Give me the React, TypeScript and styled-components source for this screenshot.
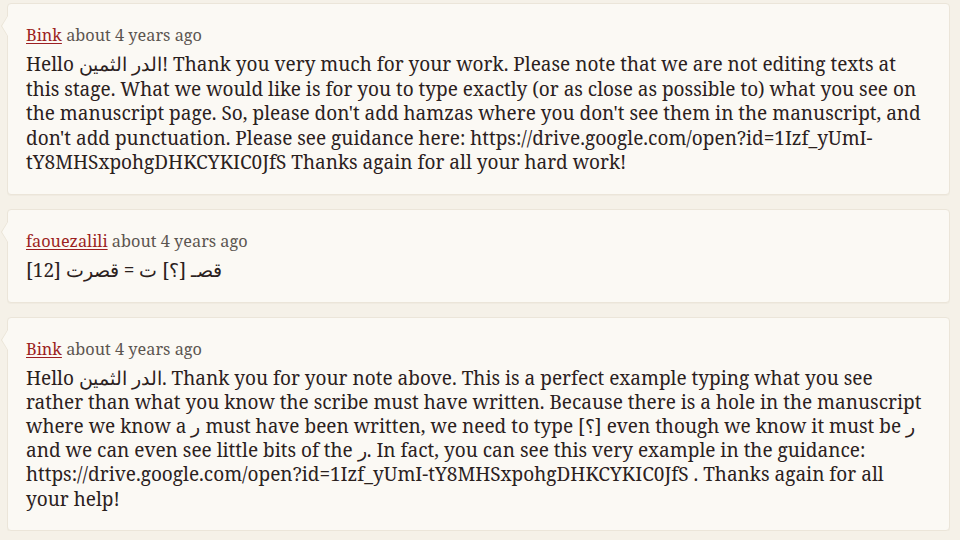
import React from "react";
import styled, { createGlobalStyle } from "styled-components";

const GlobalStyle = createGlobalStyle`
  html, body {
    margin: 0;
    padding: 0;
    background: #f5f1e8;
  }
  body {
    font-family: "Noto Serif", "DejaVu Serif", serif;
    color: #2b211d;
  }
`;

const Feed = styled.div`
  display: flex;
  flex-direction: column;
  gap: 14px;
  padding: 3px 10px 0 7px;
`;

const Card = styled.article`
  position: relative;
  background: #fbf9f4;
  border: 1px solid #ebe5d9;
  border-radius: 4px;
  padding: 20px 18px 19px 18px;
  box-shadow: 0 1px 0 rgba(120, 100, 70, 0.04);

  &::before,
  &::after {
    content: "";
    position: absolute;
    width: 0;
    height: 0;
    border-style: solid;
  }
  &::before {
    top: 11px;
    left: -7px;
    border-width: 11px 7px 11px 0;
    border-color: transparent #e9e3d6 transparent transparent;
  }
  &::after {
    top: 12px;
    left: -6px;
    border-width: 10px 6px 10px 0;
    border-color: transparent #fbf9f4 transparent transparent;
  }
`;

const Meta = styled.div`
  font-size: 16.3px;
  line-height: 22px;
  color: #5b5550;
  margin-bottom: 6px;
`;

const Author = styled.a`
  color: #9c1f22;
  text-decoration: underline;
  text-underline-offset: 2px;
  text-decoration-thickness: 1px;
`;

const Body = styled.p<{ $lh?: number }>`
  margin: 0;
  font-size: 19px;
  line-height: ${(p) => p.$lh ?? 24.6}px;
  color: #2b211d;
  overflow-wrap: break-word;
`;

type Comment = { author: string; when: string; text: string; lh?: number };

const comments: Comment[] = [
  {
    author: "Bink",
    when: "about 4 years ago",
    text:
      "Hello الدر الثمين! Thank you very much for your work. Please note that we are not editing texts at this stage. What we would like is for you to type exactly (or as close as possible to) what you see on the manuscript page. So, please don't add hamzas where you don't see them in the manuscript, and don't add punctuation. Please see guidance here: https://drive.google.com/open?id=1Izf_yUmI-tY8MHSxpohgDHKCYKIC0JfS Thanks again for all your hard work!",
  },
  {
    author: "faouezalili",
    when: "about 4 years ago",
    text: "قصـ [؟] ت = قصرت [12]",
  },
  {
    author: "Bink",
    when: "about 4 years ago",
    lh: 24.2,
    text:
      "Hello الدر الثمين. Thank you for your note above. This is a perfect example typing what you see rather than what you know the scribe must have written. Because there is a hole in the manuscript where we know a ر must have been written, we need to type [؟] even though we know it must be ر and we can even see little bits of the ر. In fact, you can see this very example in the guidance: https://drive.google.com/open?id=1Izf_yUmI-tY8MHSxpohgDHKCYKIC0JfS . Thanks again for all your help!",
  },
];

export default function App() {
  return (
    <>
      <GlobalStyle />
      <Feed>
        {comments.map((c, i) => (
          <Card key={i}>
            <Meta>
              <Author href="#">{c.author}</Author> {c.when}
            </Meta>
            <Body $lh={c.lh}>{c.text}</Body>
          </Card>
        ))}
      </Feed>
    </>
  );
}
